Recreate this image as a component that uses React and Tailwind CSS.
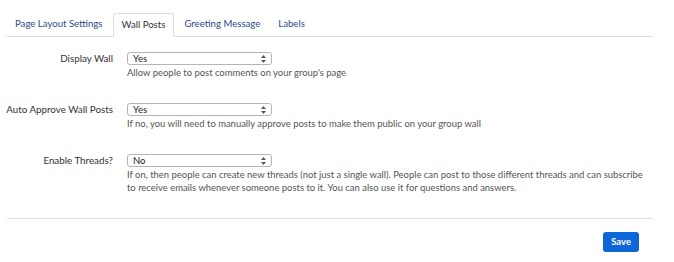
import React from 'react';

const tabs = ['Page Layout Settings', 'Wall Posts', 'Greeting Message', 'Labels'];

const rows = [
  {
    label: 'Display Wall',
    value: 'Yes',
    help: ["Allow people to post comments on your group's page"],
  },
  {
    label: 'Auto Approve Wall Posts',
    value: 'Yes',
    help: ['If no, you will need to manually approve posts to make them public on your group wall'],
  },
  {
    label: 'Enable Threads?',
    value: 'No',
    help: [
      'If on, then people can create new threads (not just a single wall). People can post to those different threads and can subscribe',
      'to receive emails whenever someone posts to it. You can also use it for questions and answers.',
    ],
  },
];

const SelectBox = ({ value }) => (
  <div className="relative flex h-[13px] w-[145px] items-center rounded-[3px] border border-[#b5b5b5] bg-white pl-[5px] text-[9.5px] leading-none text-[#222]">
    {value}
    <svg className="absolute right-[5px] top-[2px]" width="5" height="8" viewBox="0 0 5 8">
      <path d="M2.5 0 L5 3 H0 Z" fill="#555" />
      <path d="M2.5 8 L5 5 H0 Z" fill="#555" />
    </svg>
  </div>
);

export default function App() {
  return (
    <div className="h-[262px] w-[674px] bg-white px-[7px] pt-[13px] font-['Lato','Liberation_Sans',sans-serif]">
      <div className="flex w-[646px] border-b border-[#dddddd]">
        {tabs.map((t) =>
          t === 'Wall Posts' ? (
            <div
              key={t}
              className="-mb-px mr-[2px] flex h-[24px] items-center rounded-t-[3px] border border-[#dddddd] border-b-white bg-white px-[8px] text-[9.6px] text-[#333]"
            >
              {t}
            </div>
          ) : (
            <div key={t} className="mr-[2px] flex h-[23px] items-center px-[8px] text-[9.6px] text-[#2c4a8c]">
              {t}
            </div>
          )
        )}
      </div>

      <div className="mt-[15px] flex flex-col gap-[24px]">
        {rows.map((r) => (
          <div key={r.label} className="flex">
            <div className="flex h-[13px] w-[106px] items-center justify-end whitespace-nowrap text-[9.8px] text-[#333]">
              {r.label}
            </div>
            <div className="ml-[14px]">
              <SelectBox value={r.value} />
              <div className="mt-px whitespace-nowrap text-[9.45px] leading-[13px] text-[#555]">
                {r.help.map((h) => (
                  <div key={h}>{h}</div>
                ))}
              </div>
            </div>
          </div>
        ))}
      </div>

      <div className="mt-[24px] w-[646px] border-t border-[#e2e2e2]" />

      <div className="flex w-[646px] justify-end pr-[14px] pt-[13px]">
        <button className="h-[20px] rounded-[3px] bg-[#0f66d6] px-[8px] text-[9.5px] font-bold text-white">Save</button>
      </div>
    </div>
  );
}
